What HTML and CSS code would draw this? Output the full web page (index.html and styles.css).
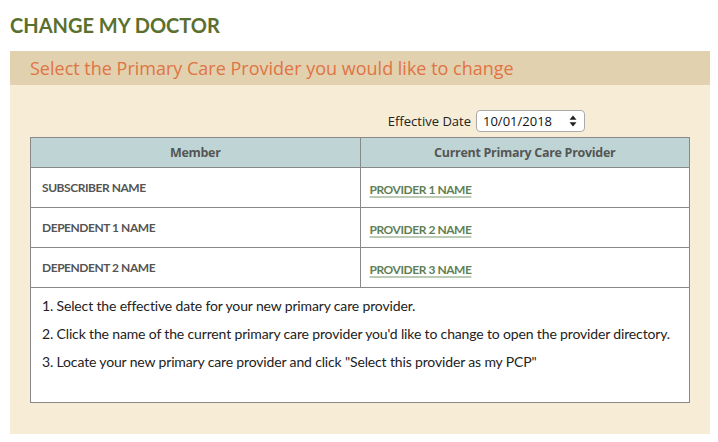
FILE: index.html
```html
<!DOCTYPE html>
<html lang="en">
<head>
    <meta charset="UTF-8">
    <title>Change My Doctor</title>
    <link rel="stylesheet" href="styles.css">
</head>
<body>
    <h1 class="page-title">CHANGE MY DOCTOR</h1>

    <div class="panel">
        <div class="panel-head">Select the Primary Care Provider you would like to change</div>
        <div class="panel-body">
            <!-- effective date picker -->
            <div class="date-row">
                <span class="date-label">Effective Date</span>
                <div class="date-select">
                    <span>10/01/2018</span>
                    <svg width="8" height="12" viewBox="0 0 8 12">
                        <path d="M4 0.5 L7.5 4.8 L0.5 4.8 Z" fill="#222"/>
                        <path d="M4 11.5 L7.5 7.2 L0.5 7.2 Z" fill="#222"/>
                    </svg>
                </div>
            </div>

            <table class="pcp-table">
                <tr class="head-row">
                    <th>Member</th>
                    <th>Current Primary Care Provider</th>
                </tr>
                <tr>
                    <td class="member">SUBSCRIBER NAME</td>
                    <td><a href="#" class="provider">PROVIDER 1 NAME</a></td>
                </tr>
                <tr>
                    <td class="member">DEPENDENT 1 NAME</td>
                    <td><a href="#" class="provider">PROVIDER 2 NAME</a></td>
                </tr>
                <tr>
                    <td class="member">DEPENDENT 2 NAME</td>
                    <td><a href="#" class="provider">PROVIDER 3 NAME</a></td>
                </tr>
                <tr>
                    <td colspan="2" class="steps">
                        <p>1. Select the effective date for your new primary care provider.</p>
                        <p>2. Click the name of the current primary care provider you'd like to change to open the provider directory.</p>
                        <p>3. Locate your new primary care provider and click "Select this provider as my PCP"</p>
                    </td>
                </tr>
            </table>
        </div>
    </div>
</body>
</html>
```

FILE: styles.css
```css
body {
    margin: 0;
    padding: 0 8px 0 10px;
    background-color: #fff;
    font-family: Lato, "Open Sans", sans-serif;
}
.page-title {
    margin: 0;
    padding-top: 13px;
    height: 51px;
    box-sizing: border-box;
    font-size: 20px;
    font-weight: bold;
    color: #5b6f2f;
}
.panel {
    width: 700px;
    background-color: #f7ecd6;
    padding-bottom: 31px;
}
.panel-head {
    height: 34px;
    line-height: 34px;
    padding-left: 20px;
    background-color: #e2d1ae;
    color: #e07444;
    font-family: "Open Sans", sans-serif;
    font-size: 18px;
}
.panel-body {
    padding: 25px 20px 0 20px;
}
.date-row {
    display: flex;
    justify-content: flex-end;
    align-items: center;
    gap: 5px;
    padding-right: 105px;
    height: 22px;
    margin-bottom: 5px;
}
.date-label {
    font-family: "Open Sans", sans-serif;
    font-size: 13px;
    color: #222;
}
.date-select {
    display: flex;
    justify-content: space-between;
    align-items: center;
    width: 94px;
    height: 20px;
    padding: 0 7px 0 6px;
    background-color: #fff;
    border: 1px solid #aaa;
    border-radius: 4px;
    font-family: "Open Sans", sans-serif;
    font-size: 13px;
    color: #111;
}
.pcp-table {
    width: 660px;
    border-collapse: collapse;
    background-color: #fff;
}
.pcp-table th,
.pcp-table td {
    border: 1px solid #888;
    text-align: left;
    padding: 0 9px;
}
.head-row th {
    height: 29px;
    background-color: #bfd5d5;
    text-align: center;
    font-family: "Open Sans", sans-serif;
    font-size: 12.5px;
    font-weight: bold;
    color: #555;
    letter-spacing: -0.3px;
}
.pcp-table td {
    height: 39px;
    width: 50%;
}
.pcp-table td.member {
    padding-left: 11px;
    font-family: Lato, sans-serif;
    font-size: 12px;
    font-weight: bold;
    color: #555;
    letter-spacing: -0.45px;
}
.provider {
    font-family: Lato, sans-serif;
    font-size: 12px;
    font-weight: bold;
    color: #5f7f55;
    letter-spacing: -0.45px;
    text-decoration: underline;
    text-decoration-color: #bccbb5;
    text-decoration-thickness: 2px;
    text-underline-offset: 2px;
}
.pcp-table td.steps {
    height: 106px;
    vertical-align: top;
    padding-top: 8px;
    padding-left: 11px;
}
.steps p {
    margin: 0 0 9px 0;
    font-family: Lato, sans-serif;
    font-size: 14px;
    letter-spacing: -0.15px;
    color: #222;
    line-height: 19px;
}
```
